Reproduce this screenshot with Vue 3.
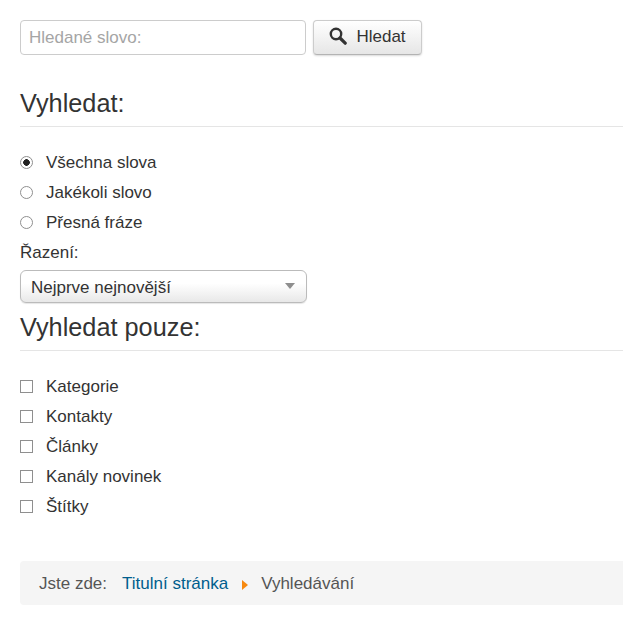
<script setup>
import { ref } from 'vue';

const phrase = ref('all');
const ordering = ref('newest');

const phrases = [
  { value: 'all', label: 'Všechna slova' },
  { value: 'any', label: 'Jakékoli slovo' },
  { value: 'exact', label: 'Přesná fráze' },
];

const areas = ['Kategorie', 'Kontakty', 'Články', 'Kanály novinek', 'Štítky'];
</script>

<template>
  <main class="search-page">
    <form class="search-bar" @submit.prevent>
      <input class="search-input" type="text" placeholder="Hledané slovo:" />
      <button class="search-btn" type="submit">
        <svg class="search-icon" viewBox="0 0 18 18" width="18" height="18" aria-hidden="true">
          <circle cx="7" cy="7" r="5.2" fill="none" stroke="#333" stroke-width="2.4" />
          <path d="M11 11l5.2 5.2" fill="none" stroke="#333" stroke-width="3.2" stroke-linecap="round" />
        </svg>
        Hledat
      </button>
    </form>

    <h2 class="section-title first">Vyhledat:</h2>
    <div class="options">
      <label v-for="item in phrases" :key="item.value" class="option">
        <input v-model="phrase" class="radio" type="radio" name="phrase" :value="item.value" />
        <span>{{ item.label }}</span>
      </label>
    </div>

    <div class="order-label">Řazení:</div>
    <div class="select-wrap">
      <select v-model="ordering" class="order-select">
        <option value="newest">Nejprve nejnovější</option>
        <option value="oldest">Nejprve nejstarší</option>
      </select>
      <span class="select-arrow"></span>
    </div>

    <h2 class="section-title second">Vyhledat pouze:</h2>
    <div class="options">
      <label v-for="area in areas" :key="area" class="option">
        <input class="check" type="checkbox" />
        <span>{{ area }}</span>
      </label>
    </div>

    <nav class="breadcrumb">
      <span class="here">Jste zde:</span>
      <a href="#" class="crumb-link">Titulní stránka</a>
      <span class="crumb-sep"></span>
      <span>Vyhledávání</span>
    </nav>
  </main>
</template>

<style>
html,
body {
  overflow: hidden;
  background: #fff;
}
</style>

<style scoped>
.search-page {
  padding: 20px 0 18px 20px;
  font-family: "Liberation Sans", Arial, sans-serif;
  font-size: 17px;
  line-height: 24px;
  color: #333;
}

.search-bar {
  display: flex;
  gap: 7px;
}

.search-input {
  box-sizing: border-box;
  width: 286px;
  height: 35px;
  padding: 0 8px;
  border: 1px solid #ccc;
  border-radius: 4px;
  font: inherit;
  color: #333;
  outline: none;
}

.search-input::placeholder {
  color: #a5a5a5;
  opacity: 1;
}

.search-btn {
  box-sizing: border-box;
  display: flex;
  align-items: center;
  justify-content: center;
  gap: 9px;
  width: 109px;
  height: 35px;
  padding: 0 0 2px;
  border: 1px solid #ccc;
  border-bottom-color: #b3b3b3;
  border-radius: 4px;
  background: linear-gradient(#fff, #e6e6e6);
  box-shadow: 0 1px 2px rgba(0, 0, 0, 0.15);
  font: inherit;
  color: #333;
}

.search-icon {
  margin-top: -2px;
}

.section-title {
  margin: 0;
  padding-bottom: 8px;
  border-bottom: 1px solid #e5e5e5;
  font-size: 25.3px;
  font-weight: 400;
  line-height: 30px;
}

.section-title.first {
  margin-top: 33px;
  margin-bottom: 21px;
}

.section-title.second {
  margin-top: 9px;
  margin-bottom: 21px;
}

.options {
  display: flex;
  flex-direction: column;
}

.option {
  display: flex;
  align-items: center;
  height: 30px;
}

.radio,
.check {
  appearance: none;
  box-sizing: border-box;
  width: 13px;
  height: 13px;
  margin: 0 13px 2px 0;
  flex: none;
  border: 1px solid #8f8f8f;
  background: #fff;
}

.radio {
  border-radius: 50%;
}

.radio:checked {
  background: radial-gradient(circle, #222 0, #222 3px, #fff 3.6px);
}

.order-label {
  height: 30px;
  line-height: 30px;
  margin-bottom: 2px;
}

.select-wrap {
  position: relative;
  width: 287px;
  height: 33px;
}

.order-select {
  box-sizing: border-box;
  width: 100%;
  height: 100%;
  padding: 2px 10px 0;
  border: 1px solid #bbb;
  border-radius: 6px;
  background: linear-gradient(#fff, #fff 40%, #e8e8e8);
  box-shadow: 0 1px 1px rgba(0, 0, 0, 0.1);
  appearance: none;
  font: inherit;
  color: #333;
}

.select-arrow {
  position: absolute;
  top: 13px;
  right: 12px;
  border-style: solid;
  border-width: 6px 5px 0;
  border-color: #8e8e8e transparent transparent;
  pointer-events: none;
}

.breadcrumb {
  box-sizing: border-box;
  display: flex;
  align-items: center;
  height: 44px;
  margin-top: 39px;
  padding: 2px 0 0 19px;
  border-radius: 4px 0 0 4px;
  background: #f5f5f5;
  color: #555;
}

.here {
  margin-right: 15px;
}

.crumb-link {
  color: #005e8d;
  text-decoration: none;
}

.crumb-sep {
  width: 0;
  height: 0;
  margin: 2px 13px 0 14px;
  border-style: solid;
  border-width: 5px 0 5px 6px;
  border-color: transparent transparent transparent #f7890f;
}
</style>
